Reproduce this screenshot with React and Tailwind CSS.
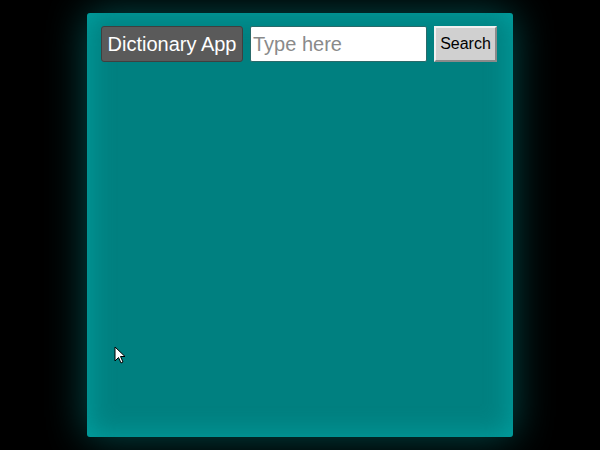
import React from 'react';

const Cursor = () => (
  <svg
    className="absolute left-[114px] top-[346px]"
    width="12"
    height="18"
    viewBox="0 0 12 18"
  >
    <path d="M1 1 L1 15 L4.5 11.5 L7 17 L9 16 L6.5 10.5 L11 10.5 Z" fill="#fff" stroke="#000" strokeWidth="1" />
  </svg>
);

const App = () => {
  return (
    <div className="relative w-full h-screen bg-black flex items-center justify-center font-['Liberation_Sans',Arial,sans-serif]">
      <div className="w-[426px] h-[424px] rounded-[3px] bg-[#008080] shadow-[inset_0_0_28px_rgba(0,230,230,0.35),0_0_40px_rgba(0,170,170,0.45)] flex flex-col px-[14px] pt-[13px]">
        {/* HEADER */}
        <div className="flex items-center gap-[7px] h-[36px]">
          <div className="h-[36px] w-[142px] flex items-center justify-center bg-[#5a5a5a] border border-[#3f3f3f] rounded-[3px] text-white text-[20px]">
            Dictionary App
          </div>
          <input
            type="text"
            placeholder="Type here"
            className="h-[36px] w-[177px] bg-white border border-[#2a6a6a] rounded-[2px] px-[2px] text-[20px] text-black placeholder:text-[#8a8a8a] outline-none"
          />
          <button className="h-[36px] w-[63px] bg-[#d0d0d0] border-2 border-t-[#f0f0f0] border-l-[#f0f0f0] border-r-[#8a8a8a] border-b-[#8a8a8a] text-black text-[16px] flex items-center justify-center">
            Search
          </button>
        </div>
      </div>
      <Cursor />
    </div>
  );
};

export default App;
